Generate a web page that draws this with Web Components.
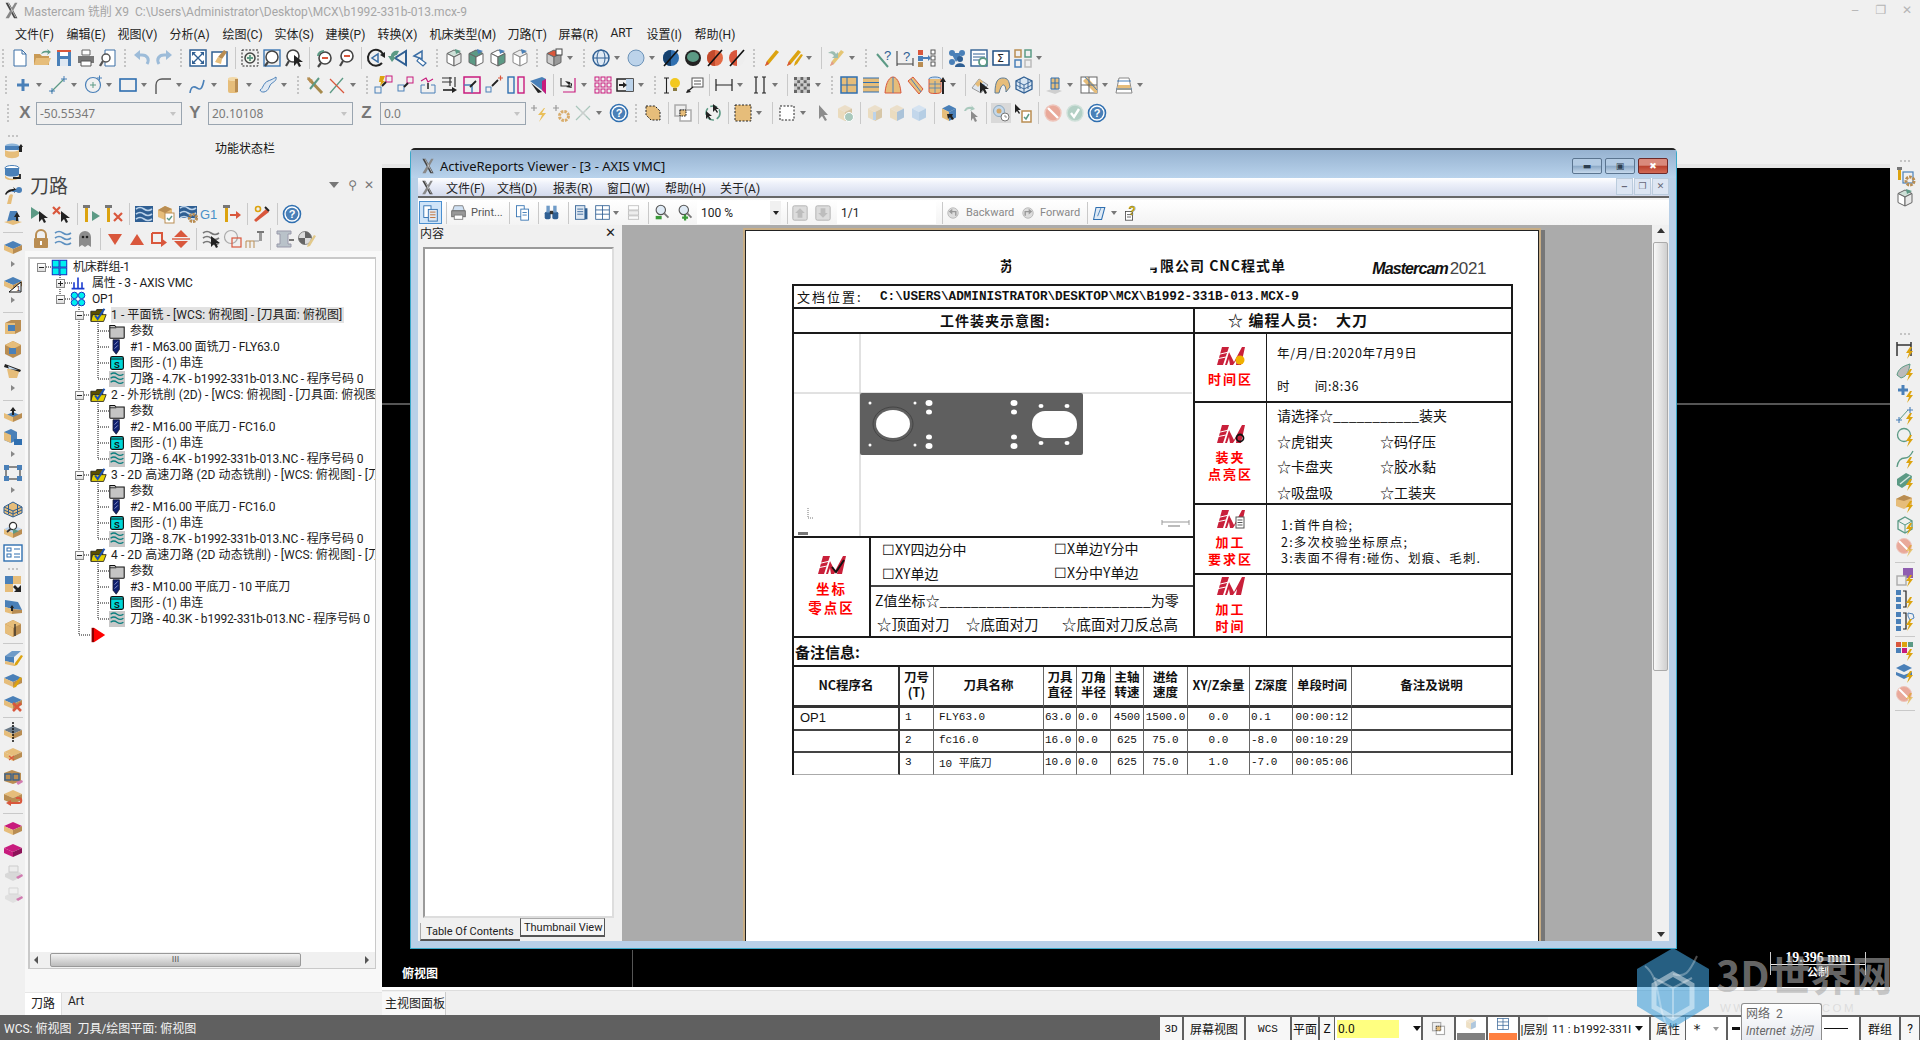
<!DOCTYPE html>
<html lang="zh">
<head>
<meta charset="utf-8">
<title>Mastercam</title>
<style>
  html, body { margin: 0; padding: 0; background: #f0f0f0; }
  body { font: 12px "Roboto", "Noto Sans CJK SC", sans-serif; color: #222; }
</style>
</head>
<body>
<mc-app></mc-app>
<script>
const BLUE = '#4a80b8', TAN = '#e6bd7a', DTAN = '#b98d52', GRN = '#5c9a85', RED = '#d9573c', PNK = '#c81b7d', GOLD = '#dca30f', INK = '#333';
const CJK = '"Roboto", "Noto Sans CJK SC", sans-serif';

const fb = (t = BLUE, l = TAN, r = DTAN) => `<path d="M1 8 10 4l9 4-9 4z" fill="${t}"/><path d="M1 8l9 4v5l-9-4z" fill="${l}"/><path d="M19 8l-9 4v5l9-4z" fill="${r}"/>`;
const cube = (t, l, r, s = 'none') => `<path d="M10 2l7 3.5-7 3.5-7-3.5z" fill="${t}" stroke="${s}"/><path d="M3 5.5l7 3.5v9l-7-3.5z" fill="${l}" stroke="${s}"/><path d="M17 5.5l-7 3.5v9l7-3.5z" fill="${r}" stroke="${s}"/>`;
const bolt = `<path d="M15 8l-4 6h3l-2 6 6-8h-3l2-4z" fill="${GOLD}"/>`;
const cur = `<path d="M10 7v11l3-3 2 4 2-1-2-4h4z" fill="#222"/>`;
const line = (d, c = INK, w = 1.2) => `<path d="${d}" fill="none" stroke="${c}" stroke-width="${w}"/>`;
const wave = (c = BLUE, y = 4) => line(`M2 ${y}q4-3 8 0t8 0M2 ${y + 5}q4-3 8 0t8 0M2 ${y + 10}q4-3 8 0t8 0`, c, 1.6);
const cvw = (c) => cube('#cfe0d8', '#fff', '#e8e8e8', '#666') + `<path d="M11 1l6 2-5 3z" fill="${c}"/>`;
const sph = (a, b) => `<circle cx="10" cy="10" r="8" fill="${a}"/><path d="M10 2a8 8 0 0 0 0 16z" fill="${b}"/>`;
const slash = (a, b) => sph(a, b) + line('M3 18 17 2', '#111', 1.6);
const pencil = `<path d="M4 18l2-5L15 2l3 2L8 16z" fill="${GOLD}"/><path d="M4 18l2-5 2 3z" fill="${RED}"/>`;
const sel = (c1, c2) => `<rect x="2" y="10" width="6" height="6" fill="none" stroke="${c1}"/><rect x="11" y="2" width="6" height="6" fill="none" stroke="${c2}"/>`;

const ICONS = {
  new: `<path d="M4 2h8l4 4v12H4z" fill="#fff" stroke="#3a6ea5"/><path d="M12 2v4h4" fill="none" stroke="#3a6ea5"/>`,
  open: `<path d="M2 6h6l2 2h7v9H2z" fill="#c99a55"/><path d="M4 10h15l-3 7H2z" fill="${TAN}"/><path d="M9 6c1-3 4-4 7-3l-1-2 4 3-4 3 1-2c-2-1-5 0-7 1z" fill="${GRN}"/>`,
  save: `<path d="M3 2h14v16H3z" fill="${BLUE}"/><path d="M6 2h8v6H6z" fill="#fff"/><path d="M3 2h14v2H3z" fill="${RED}"/><path d="M6 11h8v7H6z" fill="#dfe8f2"/>`,
  print: `<path d="M6 2h8v5H6z" fill="#fff" stroke="#666"/><path d="M2 8h16v7H2z" fill="#777"/><path d="M5 13h10v5H5z" fill="#fff" stroke="#555"/>`,
  preview: `<path d="M7 2h10v16H7z" fill="#fff" stroke="#3a6ea5"/><circle cx="8" cy="10" r="4" fill="#fff" stroke="#555" stroke-width="1.5"/>` + line('M5 13 2 18', '#555', 2.4),
  undo: line('M15 16c3-5 0-9-5-9H6', '#9dbcd9', 3) + `<path d="M8 2 2 7l6 5z" fill="#9dbcd9"/>`,
  redo: line('M5 16c-3-5 0-9 5-9h4', '#9dbcd9', 3) + `<path d="M12 2l6 5-6 5z" fill="#9dbcd9"/>`,
  fit: `<rect x="2" y="2" width="16" height="16" fill="#fff" stroke="#2f5f93" stroke-width="1.5"/>` + line('M5 5l10 10M15 5 5 15', '#2f5f93', 1.4) + `<path d="M4 4h4L4 8zM16 4h-4l4 4zM4 16h4l-4-4zM16 16h-4l4-4z" fill="#2f5f93"/>`,
  brush: `<rect x="2" y="4" width="15" height="14" fill="#fff" stroke="#2f5f93" stroke-width="1.5"/><path d="M8 9l6-7 3 2-5 7z" fill="${DTAN}"/><path d="M5 14l3-5 4 2-1 5z" fill="${TAN}"/>`,
  zwin: `<rect x="2" y="2" width="16" height="16" fill="none" stroke="#222" stroke-dasharray="2 1.5"/><circle cx="10" cy="10" r="5" fill="#eef3e8" stroke="#444" stroke-width="1.5"/>` + line('M10 7v6M7 10h6', GRN, 1.8),
  zcir: `<rect x="2" y="2" width="16" height="16" fill="none" stroke="#2f6fb0" stroke-width="1.3"/><circle cx="10" cy="9" r="6" fill="#fff" stroke="#444" stroke-width="1.5"/>` + line('M6 14 3 18', '#444', 2.2),
  zcur: `<circle cx="9" cy="8" r="6" fill="#fff" stroke="#444" stroke-width="1.6"/>` + line('M5 13 2 18', '#444', 2.2) + cur,
  zprev: `<circle cx="11" cy="10" r="6" fill="#fff" stroke="#444" stroke-width="1.6"/>` + line('M7 15 4 19', '#444', 2.2) + line('M8 10h6', RED, 2) + line('M4 8c0-3 3-5 6-5', GRN, 2),
  zout: `<circle cx="11" cy="8" r="6" fill="#fff" stroke="#444" stroke-width="1.6"/>` + line('M7 13 4 18', '#444', 2.2) + line('M8 8h6', RED, 2),
  rot: `<path d="M16 15A8 8 0 1 1 17 6" fill="none" stroke="#222" stroke-width="2"/><path d="M14 7l5-3v6z" fill="#222"/><path d="M12 6v8L6 10z" fill="none" stroke="#3a6ea5" stroke-width="1.5"/>`,
  arrback: `<path d="M18 3v14L7 10z" fill="none" stroke="#2f5f93" stroke-width="2"/><path d="M3 8c0-4 4-6 8-5l-2 4c-2 0-3 1-3 2l2 0-4 5-4-6z" fill="${GRN}"/>`,
  tri: `<path d="M4 8l8-5v8z" fill="none" stroke="#3a6ea5" stroke-width="1.5"/><path d="M9 10l7 5-3 3-6-5z" fill="#fff" stroke="#3a6ea5" stroke-width="1.2"/>`,
  cv1: cvw(GRN), cv2: cube(GRN, GRN, '#fff', '#666') + `<path d="M11 1l6 2-5 3z" fill="${BLUE}"/>`, cv3: cube('#fff', '#fff', GRN, '#666') + `<path d="M11 1l6 2-5 3z" fill="${BLUE}"/>`, cv4: cube('#eee', '#fff', '#fff', '#888') + `<path d="M11 1l6 2-5 3z" fill="${BLUE}"/>`,
  cred: cube(RED, '#ccc', '#999', '#666') + `<rect x="12" y="1" width="6" height="6" fill="#fff" stroke="#444"/>`,
  globe: `<circle cx="10" cy="10" r="8" fill="#dfeaf5" stroke="#2f5f93" stroke-width="1.5"/><ellipse cx="10" cy="10" rx="4" ry="8" fill="none" stroke="#2f5f93"/>` + line('M2 10h16', '#2f5f93', 1),
  sph: `<circle cx="10" cy="10" r="8" fill="#bcd3ea" stroke="#6d93b8"/>`,
  sdark: slash('#2f6fb0', '#14406e'), sgreen: `<circle cx="10" cy="10" r="8" fill="#222"/><ellipse cx="10" cy="9" rx="6" ry="5" fill="#5c9a85"/>`, sred: slash('#e36a45', '#c24a2c'), swhite: slash('#eee', RED),
  pen: pencil,
  pen2: pencil + `<path d="M11 18l1-4 6-8 2 1-6 9z" fill="${GOLD}"/>`,
  pendim: `<g opacity=".55">${pencil}</g>` + `<path d="M2 5c4-3 7-2 8 1l2-2v6H6l2-2c-1-2-3-3-6-3z" fill="#9cbdb0"/>`,
  qline: line('M4 6l11 13', GRN, 2) + `<text x="11" y="12" font-size="13" font-family="Liberation Sans" fill="#2f5f93">?</text>`,
  qdim: line('M2 3v15M2 16h16M18 10v8', '#444', 1.1) + `<text x="8" y="13" font-size="13" font-family="Liberation Sans" fill="#2f5f93">?</text>`,
  tree: `<rect x="1" y="2" width="5" height="5" fill="${RED}"/><rect x="1" y="8" width="5" height="5" fill="${BLUE}"/><rect x="1" y="14" width="5" height="5" fill="${DTAN}"/><path d="M6 9h5v-2l3 3-3 3v-2H6z" fill="${BLUE}"/><rect x="14" y="2" width="4" height="4" fill="#fff" stroke="#555"/><rect x="14" y="8" width="4" height="4" fill="#fff" stroke="#555"/><rect x="14" y="14" width="4" height="4" fill="#fff" stroke="#555"/>`,
  people: `<circle cx="5" cy="5" r="3" fill="${BLUE}"/><circle cx="15" cy="5" r="3" fill="${BLUE}"/><circle cx="5" cy="14" r="3" fill="${BLUE}"/><path d="M4 5l11 0-6 9z" fill="${BLUE}"/><circle cx="13" cy="11" r="3" fill="#2f5f93"/><path d="M8 19c0-5 10-5 10 0z" fill="#2f5f93"/>`,
  report: `<rect x="2" y="2" width="16" height="16" fill="#fff" stroke="#2f5f93" stroke-width="1.4"/>` + line('M4 6h12M4 9h12M4 12h7', '#2f5f93', 1) + `<circle cx="14" cy="14" r="4" fill="none" stroke="${GRN}" stroke-width="1.8"/>`,
  sigma: `<rect x="2" y="3" width="16" height="14" fill="#fff" stroke="#1f4f83" stroke-width="1.5"/><text x="6" y="14" font-size="11" font-family="DejaVu Sans" fill="#222">Σ</text>`,
  grid4: `<rect x="2" y="2" width="6" height="7" fill="none" stroke="${DTAN}" stroke-width="1.5"/><rect x="12" y="2" width="6" height="7" fill="none" stroke="${GRN}" stroke-width="1.5"/><rect x="2" y="12" width="6" height="7" fill="none" stroke="${BLUE}" stroke-width="1.5"/><rect x="12" y="12" width="6" height="7" fill="none" stroke="#bbb" stroke-width="1.5"/>`,
  plus: line('M10 4v12M4 10h12', BLUE, 3),
  line: line('M3 17 16 4', GRN, 1.2) + line('M13 4h6M16 1v6M1 16h6M4 13v6', BLUE, 1),
  circ: `<circle cx="10" cy="10" r="7.5" fill="none" stroke="${BLUE}" stroke-width="1.2"/>` + line('M7 10h6M10 7v6', GRN, 1) + line('M14 3h5M16.5 .5v5', BLUE, 1),
  rect: `<rect x="2" y="4" width="16" height="12" fill="none" stroke="#2f6fb0" stroke-width="1.6"/>`,
  fil: line('M3 19V10c0-4 3-6 6-6h9', '#555', 1.4),
  spl: line('M2 18c1-7 4-7 7-5s5 2 7-8', BLUE, 1.6),
  cyl: `<rect x="5" y="3" width="10" height="15" rx="2" fill="${TAN}"/><ellipse cx="10" cy="4" rx="5" ry="2" fill="#f2d8a6"/><rect x="12" y="4" width="3" height="13" fill="${DTAN}"/>`,
  surf: `<path d="M2 15c3-1 3-7 8-9s5-2 8-4c1 4-3 5-5 7s-2 7-7 8c-2 0-3 0-4-2z" fill="#dfe8f2" stroke="${BLUE}"/>`,
  trim: line('M3 3l14 15', '#a68a4c', 3) + line('M14 3 5 14', GRN, 2) + `<path d="M2 2l6 3-3 3z" fill="${DTAN}"/>`,
  cross: line('M3 18 16 3', GRN, 1.3) + line('M3 4l14 14', RED, 1.3),
  x1: `<rect x="12" y="1" width="6" height="6" fill="none" stroke="${PNK}"/><rect x="1" y="12" width="6" height="6" fill="none" stroke="${BLUE}"/><path d="M6 1h5L9 6h2L6 11l1-4H5z" fill="${GOLD}"/>` + line('M8 11l4-4', '#222', 2),
  x2: sel(BLUE, PNK) + line('M8 12l4-4', '#222', 2),
  x3: line('M3 6l5-3 2 4 5-3', PNK, 1.2) + `<path d="M3 10h4M13 10h4M3 10v8h14v-8" fill="none" stroke="${BLUE}"/>` + line('M10 8v6', '#222', 1.5),
  x4: line('M2 3h10M2 7h10M10 2v9M15 2v10', INK, 1.2) + line('M3 15h11', '#222', 1.6) + `<path d="M12 12l5 3-5 3z" fill="#222"/>`,
  x5: `<rect x="2" y="2" width="16" height="16" fill="none" stroke="${PNK}" stroke-width="1.5"/><path d="M2 10h8v8" fill="none" stroke="${BLUE}" stroke-width="1.5"/>` + line('M8 12l6-6', '#222', 1.8),
  x6: `<rect x="2" y="12" width="5" height="5" fill="none" stroke="${BLUE}"/>` + line('M8 11l6-6', '#222', 1.8) + line('M14 3h5M16.5 .5v5', RED, 1.2),
  x7: `<rect x="2" y="2" width="6" height="16" fill="none" stroke="#2f6fb0" stroke-width="1.4"/><rect x="12" y="2" width="6" height="16" fill="none" stroke="${PNK}" stroke-width="1.4"/>`,
  x8: `<path d="M2 6l12-4 4 2v15l-4-4z" fill="${BLUE}"/><path d="M14 6l4-2v15l-4-4z" fill="${PNK}"/><path d="M3 8l11 9-4 1z" fill="#222"/>`,
  x9: line('M3 3v8h10', INK, 1.1) + line('M17 3v14H5', PNK, 1.2) + `<path d="M7 6l7 7-2-6zM14 13l-6-1 6-4z" fill="#222"/>`,
  gridp: `<g fill="${PNK}">${[2, 8, 14].flatMap(y => [2, 8, 14].map(x => `<rect x="${x}" y="${y}" width="4" height="4" fill="none" stroke="${PNK}"/>`)).join('')}</g>`,
  x10: `<rect x="2" y="4" width="16" height="12" fill="none" stroke="#222" stroke-width="1.5"/><rect x="11" y="4" width="7" height="12" fill="#bcd3ea"/><path d="M4 9h4V7l4 3-4 3v-2H4z" fill="#222"/>`,
  lamp: line('M2 3h5M2 18h5M4.5 3v15', '#222', 1.1) + `<circle cx="13" cy="8" r="5" fill="#f2c81f"/><rect x="11" y="13" width="4" height="3" fill="#8a7a40"/>`,
  note: `<rect x="8" y="3" width="11" height="9" fill="#fff" stroke="#555"/>` + line('M10 6h7M10 9h7', '#555', 1) + line('M9 12l-6 5', '#222', 1.3) + `<path d="M2 18l2-4 3 3z" fill="#222"/>`,
  dimh: line('M2 4v12M18 4v12M2 10h16', '#222', 1.2),
  dimv: line('M5 2h4M5 18h4M7 2v16M13 2h4M13 18h4M15 2v16', '#222', 1.2),
  check: [...Array(25)].map((_, i) => `<rect x="${2 + (i % 5) * 3.2}" y="${2 + Math.floor(i / 5) * 3.2}" width="3.2" height="3.2" fill="${i % 2 ? '#ccc' : '#666'}"/>`).join(''),
  s1: `<rect x="2" y="2" width="16" height="16" fill="${TAN}" stroke="#2f6fb0" stroke-width="1.5"/>` + line('M8 2v16M2 10h16', '#2f6fb0', 1),
  s2: `<rect x="2" y="3" width="16" height="14" fill="${TAN}"/>` + line('M2 3h16M2 7.5h16M2 12h16M2 17h16', '#2f6fb0', 1.2),
  s3: `<path d="M2 18C3 6 7 2 10 2s7 4 8 16z" fill="${TAN}" stroke="${RED}"/>` + line('M10 2v16', BLUE, 1),
  s4: `<path d="M3 6l5-4 10 12-4 5z" fill="${TAN}" stroke="${RED}"/>` + line('M6 4l10 13', BLUE, 1),
  s5: `<ellipse cx="8" cy="4" rx="6" ry="2" fill="#cfe0f2" stroke="${BLUE}"/><path d="M2 4v13c0 2 12 2 12 0V4" fill="${TAN}" stroke="${RED}"/>` + line('M2 9h12M2 13h12M8 6v12', BLUE, .8) + `<path d="M16 2l3 5h-2v12h-2V7h-2z" fill="#222"/>`,
  m1: `<path d="M2 13 9 4l9 6-7 8z" fill="#dfe6ee" stroke="#999"/><path d="M5 9l5-5 3 3-5 5z" fill="${TAN}"/><path d="M10 8l5 2-4 5z" fill="${BLUE}"/>` + cur,
  m2: `<path d="M3 18C3 6 6 3 11 3s6 3 7 9l-4 5C14 9 10 6 7 18z" fill="${TAN}" stroke="#5d7c96"/>`,
  m3: `<path d="M10 2l8 4v8l-8 4-8-4V6z" fill="#d9e6f2" stroke="#2f5f93" stroke-width="1.3"/>` + line('M2 6l8 4 8-4M10 10v8M6 4v10M14 4v10M2 10l8 4 8-4', '#2f5f93', .9),
  b1: `<path d="M2 16l9 3 7-3-8-3z" fill="#cfcfcf"/><path d="M7 3h8v11l-8 0z" fill="${TAN}" stroke="#2f6fb0"/>` + line('M11 3v11M7 8h8', '#2f6fb0', 1),
  b2: `<rect x="2" y="2" width="16" height="16" fill="#fff" stroke="#666"/><path d="M8 2l10 11v5h-2L4 6z" fill="${TAN}"/>` + line('M2 10h16M10 2v16', '#666', 1) + line('M6 2l12 13', BLUE, 1),
  b3: `<path d="M2 18h16l-3-15H5z" fill="#fff" stroke="#888"/><path d="M4 10h12l1 5H3z" fill="${TAN}"/>` + line('M3 6h14M2 14h16', BLUE, 1.2),
  qb1: line('M2 5h6M5 2v6', '#999', 1.2) + `<g transform="translate(1 0)"><path d="M14 5 8 12h4l-3 7 7-9h-4l3-5z" fill="#e9bf5a"/></g>`,
  qb2: line('M2 5h6M5 2v6', '#999', 1.2) + `<circle cx="13" cy="13" r="4.5" fill="none" stroke="#d8ac6a" stroke-width="3" stroke-dasharray="2.5 1"/>`,
  qx: line('M3 17 17 3M3 3l14 14', '#a9c6bb', 1.2) + line('M7 7l6 6M13 7l-6 6', '#ccc', 1),
  help: `<circle cx="10" cy="10" r="8.5" fill="#fff" stroke="#2f6fb0" stroke-width="1.6"/><circle cx="10" cy="10" r="6.3" fill="${BLUE}"/><text x="10" y="14" font-size="11" font-weight="700" text-anchor="middle" font-family="Liberation Sans" fill="#fff">?</text>`,
  dashb: `<path d="M3 3l9 0 5 5v9H8L3 12z" fill="${TAN}" stroke="#222" stroke-dasharray="2 1.4"/>`,
  sel2: `<rect x="2" y="2" width="11" height="11" fill="#eee" stroke="#aaa" stroke-width="1.5"/><rect x="7" y="7" width="11" height="11" fill="#fff" stroke="#aaa" stroke-width="1.5"/><rect x="7" y="7" width="6" height="6" fill="${TAN}" stroke="#222" stroke-dasharray="1.5 1"/>`,
  cyc: `<circle cx="10" cy="10" r="7" fill="none" stroke="${GRN}" stroke-width="1.6" stroke-dasharray="7 3"/><path d="M3 8v8l2-2 2 3 1-1-2-3h3zM10 1v8l2-2 2 3 1-1-2-3h3z" fill="#222"/>`,
  fillb: `<rect x="2" y="2" width="16" height="16" fill="${TAN}" stroke="#222" stroke-dasharray="2 1.5"/>`,
  dashw: `<rect x="3" y="3" width="14" height="14" fill="#fff" stroke="#222" stroke-dasharray="2 1.5"/>`,
  curg: `<path d="M6 2v14l3-3 3 5 2-1-3-5h4z" fill="#8c8c8c"/>`,
  curcube: `<g opacity=".75">${cube('#ead9bb', '#e8d4ad', '#cdb68a')}</g><circle cx="14" cy="14" r="4.5" fill="#a9c9bd" stroke="#fff"/>`,
  bx1: `<g opacity=".7">${cube('#ead9bb', '#e8d4ad', '#cdb68a')}</g><rect x="8" y="9" width="3" height="8" fill="#bcd3ea"/>`,
  bx2: `<g opacity=".7">${cube('#ead9bb', '#e8d4ad', '#8eb0d0')}</g>`,
  bx3: `<g opacity=".8">${cube('#cfe0f2', '#b9d2ea', '#a8c6e2')}</g>`,
  cv: cube(BLUE, TAN, BLUE) + `<path d="M8 11h6l-1 2 2 3-2 1-2-3-2 2z" fill="#222"/>`,
  cur2: `<path d="M3 8c1-4 5-5 8-4l-1-2 4 4-5 2 1-2c-2 0-4 0-5 2z" fill="#a9c9bd"/><path d="M10 8v10l2-3 2 4 2-1-2-4h3z" fill="#8c8c8c"/>`,
  tgt: `<rect width="20" height="20" fill="#d9d9d9"/><circle cx="8" cy="8" r="5.5" fill="#c4d8ea" stroke="#8ea8bc"/><circle cx="8" cy="8" r="2.5" fill="#d4a86a"/><circle cx="14" cy="14" r="4" fill="#fff" stroke="#777"/>` + line('M14 12v2h2', '#777', .8),
  clip: `<path d="M2 1v9l2-2 2 3 1-1-2-3h3z" fill="#222"/><rect x="9" y="8" width="9" height="11" fill="#fff" stroke="${DTAN}" stroke-width="1.5"/>` + line('M11 14l2 2 3-5', GRN, 1.5),
  no: `<circle cx="10" cy="10" r="8" fill="#e9a99a" stroke="#eec5bb" stroke-width="1.4"/>` + line('M5 5l10 10', '#fff', 2.4),
  ok: `<circle cx="10" cy="10" r="8" fill="#b3d0c5" stroke="#cfe0d9" stroke-width="1.4"/>` + line('M6 10l3 4 5-8', '#fff', 2.4),
  l1: `<ellipse cx="9" cy="5" rx="7" ry="2.5" fill="#8db4d8"/><path d="M2 5v4h14V5z" fill="${BLUE}"/><path d="M2 9c3 2 11 2 14 0v6c-3 3-11 3-14 0z" fill="${TAN}"/><path d="M14 12l4-5 2 3h-1v5h-3v-5z" fill="#222" transform="translate(0 -4)"/>`,
  l2: `<ellipse cx="9" cy="5" rx="7" ry="2.5" fill="#fff" stroke="${BLUE}"/><path d="M2 5v7c3 2 11 2 14 0V5z" fill="${BLUE}"/><path d="M2 12c3 5 11 5 14 0v3c-3 3-11 3-14 0z" fill="${TAN}"/>` + line('M10 15h7V11', '#222', 1.8),
  l3: `<path d="M4 19l2-8c1-2 3-2 4-1l-2 9z" fill="${TAN}"/><circle cx="16" cy="5" r="3" fill="${BLUE}"/><path d="M2 9c2-4 5-5 9-5l-1-2 4 3-3 3v-2c-3 0-6 1-8 4z" fill="#222"/><path d="M8 7l8-4v4z" fill="${BLUE}"/>`,
  l4: `<path d="M4 15l3-11h7l2 11z" fill="${BLUE}"/><path d="M1 15l9-2 9 2-9 3z" fill="${TAN}"/><path d="M11 10l3-5 3 5h-2v4h-2v-4z" fill="#222"/>`,
  l5: fb(), l6: fb() + `<path d="M18 19H6L18 9z" fill="#fff" stroke="#111"/><text x="13.5" y="18" font-size="7" font-family="Liberation Sans" fill="#111">1</text>`,
  l7: `<path d="M2 6l6-3h10v11l-6 3H2z" fill="${DTAN}"/><path d="M2 6h10v11H2z" fill="${TAN}"/><rect x="5" y="8" width="7" height="6" fill="${BLUE}"/>`,
  l8: `<path d="M10 2l8 4v9l-8 4-8-4V6z" fill="${DTAN}"/><path d="M2 6l8 4 8-4-8-4z" fill="${TAN}"/><rect x="6" y="9" width="7" height="6" fill="${BLUE}"/>`,
  l9: `<path d="M4 8h13l-3 9H6z" fill="${TAN}"/><path d="M2 3l16 6-1 2L1 6z" fill="#222"/><path d="M5 5l10 4-9-1z" fill="#bcd3ea"/>`,
  l10: fb('#4a80b8', TAN, DTAN).replace('M1 8 10 4l9 4-9 4z', 'M1 11 10 7l9 4-9 4z') + `<path d="M7 6l3-4 3 4h-2v4H9V6z" fill="#222"/>`,
  l11: `<path d="M1 5l7-3 6 3v8l-6 3-7-3z" fill="${BLUE}"/><path d="M1 5l7 3v8l-7-3z" fill="${TAN}"/><rect x="11" y="12" width="8" height="6" fill="#2f6fb0"/>`,
  l12: `<rect x="3" y="4" width="14" height="12" fill="none" stroke="#222"/><rect x="1" y="2" width="5" height="5" fill="${BLUE}"/><rect x="14" y="2" width="5" height="5" fill="${BLUE}"/><rect x="1" y="13" width="5" height="5" fill="${BLUE}"/><rect x="14" y="13" width="5" height="5" fill="${BLUE}"/>`,
  l13: `<path d="M1 8l9-5 9 5v6l-9 4-9-4z" fill="${TAN}" stroke="#2f5f93"/>` + line('M1 8l9 4 9-4M10 12v6M5.5 6v9M14.5 6v9M1 11l9 4 9-4', '#2f5f93', 1),
  l14: fb('#bcd3ea') + `<circle cx="10" cy="5" r="3.6" fill="#fff" stroke="#333" stroke-width="1.2"/>` + line('M7.5 8 4 11', '#333', 1.8) + `<path d="M10 8l6 2-6 3z" fill="${GRN}"/>`,
  l15: `<rect x="1" y="2" width="18" height="16" fill="#fff" stroke="#2f6fb0" stroke-width="1.4"/><rect x="4" y="5" width="4" height="3" fill="none" stroke="#2f6fb0"/><rect x="4" y="11" width="4" height="3" fill="none" stroke="#2f6fb0"/>` + line('M11 6h6M11 11h6M11 14h6', '#2f6fb0', 1.2),
  l16: `<rect x="2" y="2" width="8" height="8" fill="${BLUE}"/><rect x="10" y="2" width="8" height="8" fill="${TAN}"/><rect x="2" y="10" width="8" height="8" fill="${TAN}"/><path d="M18 18h-7l2-2-3-3 2-2 3 3 3-3z" fill="#222"/>`,
  l17: `<path d="M2 4l13 2 4 8-10-1-7-2z" fill="${BLUE}"/><path d="M2 11l7 2v5l-7-2z" fill="${TAN}"/><path d="M9 13l10 1v3l-10 1z" fill="${DTAN}"/><path d="M7 12l2-3 2 3h-1v3H8v-3z" fill="#222"/>`,
  l18: `<path d="M10 2l8 4v9l-8 4-8-4V6z" fill="${DTAN}"/><path d="M2 6l8 4 8-4-8-4z" fill="${TAN}"/><path d="M2 6l8 4v9l-8-4z" fill="${TAN}"/>` + line('M12 6v12', '#222', 1.2),
  l19: `<path d="M2 8l7-5h9l-7 6z" fill="#6f9bc8"/><path d="M2 8l9 1v6l-9-2z" fill="${BLUE}"/><path d="M2 13l9 2v3l-9-2z" fill="${TAN}"/><path d="M11 18l1-3 6-8 2 1-6 9z" fill="${GOLD}"/>`,
  l20: fb() + `<path d="M10 18l1-3 6-8 2 1-6 9z" fill="${GOLD}"/>`,
  l21: fb() + line('M10 11l8 8M18 11l-8 8', RED, 2.6),
  l22: fb('#6b7a88') + line('M10 0v20', '#111', 1.5).replace('stroke-width', 'stroke-dasharray="2 1" stroke-width'),
  l23: fb(TAN) + line('M6 12l5 4M11 12l-5 4', RED, 1.2),
  l24: `<path d="M1 7l8-3 9 3v8l-8 3-9-3z" fill="${DTAN}"/><rect x="2" y="8" width="6" height="6" fill="none" stroke="#2f5f93" stroke-width="1.3"/><rect x="10" y="8" width="6" height="6" fill="none" stroke="#2f5f93" stroke-width="1.3"/><path d="M13 16l6-2 1 2-5 3z" fill="#d07ab0"/>`,
  l25: `<path d="M1 6l9-4 9 4-9 4z" fill="${TAN}"/><path d="M1 6v6l9 4 9-4V6l-9 4z" fill="${DTAN}"/>` + line('M6 15h10c3 0 3-5 0-5h-3', RED, 2) + `<path d="M8 12v6l-5-3z" fill="${RED}"/>`,
  l26: fb(PNK),
  l27: fb(PNK, PNK, '#8c1358'),
  l28: `<path d="M2 12l8-4 8 3v4l-8 4-8-4z" fill="#d8d8d8"/><path d="M6 4h9v6H6z" fill="#ececec" stroke="#ccc"/><path d="M13 15l6-3 1 2-5 3z" fill="#d07ab0"/>`,
  l29: `<path d="M2 12l8-4 8 3v4l-8 4-8-4z" fill="#e0e0e0"/><path d="M6 4h9v6H6z" fill="#f0f0f0" stroke="#d5d5d5"/><path d="M13 15l6-3 1 2-5 3z" fill="#d07ab0"/>`,
  r1: `<rect x="8" y="6" width="10" height="11" fill="none" stroke="${BLUE}" stroke-width="1.2"/><rect x="3" y="2" width="3" height="12" fill="${GOLD}"/><rect x="2" y="1" width="5" height="3" fill="#777"/><circle cx="15" cy="15" r="4" fill="none" stroke="${DTAN}" stroke-width="3" stroke-dasharray="2.5 1"/>`,
  r2: cvw(GRN),
  t1: line('M2 3v14M16 3v14M2 6h14', INK, 1.5) + bolt,
  t2: `<path d="M2 14c1-6 6-9 13-11-1 6-2 12-9 14z" fill="#bbb" stroke="${GRN}"/>` + bolt,
  t3: line('M8 2v10M3 7h10', BLUE, 3) + bolt,
  t4: line('M4 15 13 5', GRN, 1) + line('M12 5h6M15 2v6M1 15h6M4 12v6', BLUE, 1.1) + bolt,
  t5: `<circle cx="9" cy="8" r="6.5" fill="none" stroke="${GRN}" stroke-width="1.3"/>` + bolt,
  t6: line('M2 18c1-7 4-9 8-9s6-3 8-7', GRN, 1.3) + bolt,
  t7: `<path d="M2 8l9-6 6 3-1 6-9 6-5-3z" fill="${GRN}"/>` + line('M5 13l10-8', '#d7e7e0', 1.5) + bolt,
  t8: `<path d="M1 6l8-4 8 3v7l-8 4-8-3z" fill="${TAN}"/><path d="M1 6l8-4 8 3-8 3z" fill="${DTAN}"/>` + bolt,
  t9: `<path d="M10 2l7 4v8l-7 4-7-4V6z" fill="none" stroke="${GRN}" stroke-width="1.3"/>` + line('M3 6l7 4 7-4M10 10v8', GRN, 1) + bolt,
  t10: `<rect x="8" y="1" width="10" height="10" fill="#8f5db0" /><rect x="2" y="9" width="9" height="9" fill="#eee" stroke="#aaa" stroke-width="1.4"/>` + bolt,
  t11: `<rect x="1" y="1" width="5" height="5" fill="${BLUE}"/><rect x="1" y="8" width="5" height="5" fill="${BLUE}"/><rect x="1" y="15" width="5" height="5" fill="${BLUE}"/>` + line('M8 2h3v16H8', '#222', 1.2) + bolt,
  t12: `<rect x="1" y="1" width="5" height="5" fill="${BLUE}"/><rect x="1" y="8" width="5" height="5" fill="${BLUE}"/><rect x="1" y="15" width="5" height="5" fill="${BLUE}"/>` + line('M8 2h3v16H8', '#222', 1.2) + line('M13 2l5 1 1 4-4 2-2-4z', BLUE, 1) + bolt,
  t13: `<rect x="1" y="1" width="5" height="5" fill="${RED}"/><rect x="7" y="1" width="5" height="5" fill="${GOLD}"/><rect x="13" y="1" width="5" height="5" fill="${GRN}"/><rect x="1" y="7" width="5" height="5" fill="${BLUE}"/><rect x="7" y="7" width="5" height="5" fill="${PNK}"/>` + bolt,
  t14: `<path d="M1 5l8-4 8 4-8 4zM1 9l8 3 8-3v3l-8 4-8-4z" fill="${BLUE}"/>` + bolt,
  t15: `<circle cx="9" cy="9" r="7.5" fill="#e9a99a" stroke="#eec5bb"/>` + line('M4 4l10 10', '#fff', 2) + `<g opacity=".55">${bolt}</g>`,
  play: `<path d="M2 3l9 6-9 6z" fill="${GRN}"/>` + cur,
  xcur: line('M2 3l7 7M9 3l-7 7', RED, 2.2) + cur,
  toolg: `<rect x="1" y="1" width="7" height="3" fill="#777"/><rect x="3" y="4" width="3" height="14" fill="${GOLD}"/><path d="M10 7l8 5-8 5z" fill="${GRN}"/>`,
  toolx: `<rect x="1" y="1" width="7" height="3" fill="#777"/><rect x="3" y="4" width="3" height="14" fill="${GOLD}"/>` + line('M10 9l8 8M18 9l-8 8', RED, 2.2),
  wblue: `<rect x="1" y="2" width="18" height="16" fill="#2f5f93"/>` + wave('#bcd3ea', 5),
  wclip: `<path d="M2 6l7-4 7 3v8l-7 3-7-3z" fill="${TAN}"/><path d="M2 6l7 3 7-4-7-3z" fill="${DTAN}"/><rect x="9" y="9" width="9" height="10" fill="#fff" stroke="${DTAN}"/>` + line('M11 14l2 2 3-4', GRN, 1.4),
  wgear: `<rect x="1" y="2" width="18" height="12" fill="#2f5f93"/>` + wave('#bcd3ea', 4) + `<circle cx="15" cy="14" r="3.6" fill="none" stroke="${DTAN}" stroke-width="3" stroke-dasharray="2.3 .9"/>`,
  g1: `<text x="0" y="15" font-size="13" font-family="Liberation Sans" fill="#4a90c8">G1</text>`,
  toolarrow: `<rect x="1" y="1" width="7" height="3" fill="#777"/><rect x="3" y="4" width="3" height="14" fill="${GOLD}"/><path d="M8 10h6V7l5 4-5 4v-3H8z" fill="${RED}"/>`,
  wand: `<path d="M4 18l-2-2L14 5l3 3z" fill="${RED}"/><circle cx="6" cy="5" r="2.5" fill="none" stroke="${GOLD}" stroke-width="1.6"/>` + line('M13 3l4 4', '#222', 2),
  lock: `<path d="M5 9V6a5 5 0 0 1 10 0v3" fill="none" stroke="${DTAN}" stroke-width="2"/><rect x="3" y="9" width="14" height="10" rx="1" fill="${DTAN}"/><rect x="9" y="12" width="2" height="4" fill="#fff"/>`,
  wlight: wave('#5d90c0', 4),
  ghost: `<path d="M4 18V8a6 6 0 0 1 12 0v10l-3-2-3 2-3-2z" fill="#8c8c8c"/><circle cx="8" cy="8" r="1.3" fill="#222"/><circle cx="12" cy="8" r="1.3" fill="#222"/>`,
  dn: `<path d="M3 5h14l-7 11z" fill="${RED}"/>`,
  up: `<path d="M3 16h14L10 5z" fill="${RED}"/>`,
  mv: line('M3 4h10v8', RED, 2) + line('M3 4v10h10', RED, 2) + `<path d="M12 9v9l6-4.500z" fill="${RED}"/>`,
  ud: `<path d="M3 8h14L10 1zM3 12h14l-7 7z" fill="${RED}"/>` + line('M1 10h18', RED, 1.4),
  wsel: wave('#777', 4) + cur,
  circsq: `<circle cx="8" cy="8" r="6.5" fill="none" stroke="#aaa" stroke-width="1.2"/><rect x="9" y="9" width="9" height="9" fill="none" stroke="${RED}" stroke-width="1.2"/>`,
  stepg: line('M1 19v-7h8v7M5 12v7', DTAN, 1) + `<rect x="12" y="2" width="7" height="2" fill="#777"/><rect x="14" y="4" width="3" height="8" fill="#9a9a9a"/>` + line('M9 12h5', '#9a9a9a', 1),
  mach: `<path d="M2 2h14v3h-3v10h3v3H2v-3h3V5H2z" fill="#b9c2c9" stroke="#99a"/><rect x="14" y="10" width="5" height="2" fill="#777"/>`,
  ballp: `<circle cx="8" cy="9" r="6.5" fill="#ddd" stroke="#888"/><path d="M8 9V2.500A6.500 6.500 0 0 1 14.500 9zM8 9v6.500A6.500 6.500 0 0 1 1.500 9z" fill="#666"/><path d="M10 18l1-3 6-9 2 1-6 10z" fill="#e2c98a"/>`,
  group: `<g fill="#00f0f0" stroke="#1030c0" stroke-width="1.2"><rect x="1.500" y="1.500" width="8" height="8"/><rect x="10.500" y="1.500" width="8" height="8"/><rect x="1.500" y="10.500" width="8" height="8"/><rect x="10.500" y="10.500" width="8" height="8"/></g>`,
  bars: `<path d="M2 16h16v2H2zM4 9h2v7H4zM9 3h2v13H9zM14 9h2v7h-2z" fill="#1c3cd0"/>`,
  ops: `<g fill="#00f0f0" stroke="#1030c0" stroke-width="1.2"><circle cx="5.500" cy="5.500" r="4"/><circle cx="14.500" cy="5.500" r="4"/><circle cx="5.500" cy="14.500" r="4"/><circle cx="14.500" cy="14.500" r="4"/></g>`,
  opf: `<path d="M1 5h6l1-2h7v13H1z" fill="#5c5000" stroke="#222"/><path d="M3 9h16l-3 8H1z" fill="#e4d000" stroke="#222"/>` + line('M6 10l3 4 8-12', '#1a4fb0', 2.4),
  fold: `<path d="M1 6V3h6l2 2h10v13a1 1 0 0 1-1 1H2a1 1 0 0 1-1-1z" fill="#c4c4c4" stroke="#111" stroke-width="1.3"/>` + line('M1 6h8', '#111', 1),
  tool: `<path d="M5 1h8v12l-4 6-4-5z" fill="#10206f" stroke="#223"/>` + line('M7 7l4-4M7 12l4-4', '#aab4e0', 1),
  geo: `<rect x="2" y="2" width="16" height="16" rx="2" fill="#00d8d8" stroke="#111" stroke-width="1.4"/>` + line('M2 5h16', '#111', 1.2) + `<text x="10" y="16" font-size="11" font-weight="700" text-anchor="middle" font-family="Liberation Sans" fill="#111">S</text>`,
  tpath: `<rect width="20" height="20" fill="#c8c8c8"/>` + wave('#0b7f7f', 4),
  flag: `<rect x="2" y="1" width="3" height="18" fill="#800"/><path d="M5 1l14 9-14 9z" fill="#f00"/>`,
  xlogo: `<path d="M3 1h4l10 18h-4z" fill="#444"/><path d="M17 1h-3L3 19h4z" fill="#888"/><path d="M6 1l9 17" stroke="#eee" stroke-width=".8" fill="none"/>`,
  vlist: `<rect x="2" y="2" width="8" height="13" fill="#fff" stroke="#2f6fb0"/><rect x="7" y="6" width="10" height="13" fill="#dfe8f2" stroke="#2f6fb0"/>` + line('M9 9h6M9 12h6M9 15h6', '#c06a2c', 1),
  vprint: `<path d="M5 2h10l2 6H3z" fill="#cfe0f2" stroke="#777"/><rect x="2" y="8" width="16" height="7" fill="#999" stroke="#666"/><rect x="5" y="13" width="10" height="5" fill="#fff" stroke="#777"/>`,
  vcopy: `<rect x="3" y="2" width="9" height="13" fill="#fff" stroke="#2f6fb0"/><rect x="8" y="6" width="9" height="13" fill="#fff" stroke="#2f6fb0"/>` + line('M10 10h5M10 13h5', '#2f6fb0', 1),
  vfind: `<rect x="2" y="9" width="7" height="9" rx="2" fill="#2f5f93"/><rect x="11" y="9" width="7" height="9" rx="2" fill="#2f5f93"/><rect x="4" y="2" width="4" height="8" fill="#6f9bc8"/><rect x="12" y="2" width="4" height="8" fill="#6f9bc8"/><rect x="8" y="8" width="4" height="4" fill="#333"/>`,
  vpage: `<rect x="3" y="2" width="11" height="16" fill="#dfe8f2" stroke="#2f5f93"/>` + line('M5 6h7M5 9h7M5 12h7', '#2f5f93', 1) + `<rect x="14" y="5" width="3" height="13" fill="#2f5f93"/>`,
  vmulti: `<rect x="2" y="2" width="16" height="16" fill="#fff" stroke="#2f5f93"/>` + line('M10 2v16M2 7h16M2 12h16', '#2f5f93', 1),
  vstack: `<g opacity=".4"><rect x="4" y="2" width="12" height="5" fill="#fff" stroke="#666"/><rect x="4" y="8" width="12" height="5" fill="#ddd" stroke="#666"/><rect x="4" y="14" width="12" height="4" fill="#fff" stroke="#666"/></g>`,
  vz1: `<circle cx="8" cy="7" r="5.500" fill="#dfeaf5" stroke="#555" stroke-width="1.3"/>` + line('M12 11l5 5', '#777', 2.2) + `<rect x="2" y="14" width="7" height="4" fill="#3a9a3a"/>`,
  vz2: `<circle cx="8" cy="7" r="5.500" fill="#dfeaf5" stroke="#555" stroke-width="1.3"/>` + line('M12 11l5 5', '#777', 2.2) + line('M6 16h7M9.500 12.500v7', '#3a9a3a', 2.6),
  vup: `<rect x="1" y="1" width="18" height="18" rx="2" fill="#dcdcdc" stroke="#aaa"/><path d="M10 4l6 6h-3v6H7v-6H4z" fill="#bdbdbd"/>`,
  vdn: `<rect x="1" y="1" width="18" height="18" rx="2" fill="#dcdcdc" stroke="#aaa"/><path d="M10 16l6-6h-3V4H7v6H4z" fill="#bdbdbd"/>`,
  vback: `<circle cx="10" cy="10" r="7.500" fill="#ddd" stroke="#aaa"/><path d="M9 4L4 8l5 4V9h4v5h2V7H9z" fill="#999"/>`,
  vfwd: `<circle cx="10" cy="10" r="7.500" fill="#ddd" stroke="#aaa"/><path d="M11 4l5 4-5 4V9H7v5H5V7h6z" fill="#999"/>`,
  vpen: `<path d="M5 3h11l-4 15H2z" fill="#dfeaf5" stroke="#2f6fb0" stroke-width="1.3"/>` + line('M11 4l-4 10', '#2f6fb0', 1),
  vhelp: `<rect x="3" y="8" width="9" height="11" fill="#fff" stroke="#444"/>` + line('M5 12h5M5 15h5', '#444', 1) + `<text x="7" y="12" font-size="15" font-weight="700" font-family="Liberation Sans" fill="#e2c000" stroke="#554" stroke-width=".4">?</text>`
};

class McIcon extends HTMLElement {
    static get observedAttributes() { return ['name']; }
    connectedCallback() { this._render(); }
    attributeChangedCallback() { this._render(); }
    _render() {
        if (!this.shadowRoot) this.attachShadow({ mode: 'open' });
        const s = this.getAttribute('size') || 20;
        this.shadowRoot.innerHTML = `<style>:host{display:inline-flex;flex:none;width:${s}px;height:${s}px}svg{display:block;width:100%;height:100%;overflow:visible}</style>
          <svg viewBox="0 0 20 20">${ICONS[this.getAttribute('name')] || ''}</svg>`;
    }
}
customElements.define('mc-icon', McIcon);

// toolbar built from a token string: ":" grip, "|" separator, "v" caret, ">" flyout arrow, "=N" spacer
class McToolbar extends HTMLElement {
    connectedCallback() {
        const root = this.attachShadow({ mode: 'open' });
        const vert = this.hasAttribute('vertical');
        const size = this.getAttribute('size') || 20;
        const cell = this.getAttribute('cell') || 22;
        const parts = this.getAttribute('items').trim().split(/\s+/).map(t => {
            if (t === ':') return '<i class="grip"></i>';
            if (t === '|') return '<i class="sep"></i>';
            if (t === 'v') return '<i class="caret"></i>';
            if (t === '>') return '<i class="fly"></i>';
            if (t[0] === '=') return `<i style="flex:none;${vert ? 'height' : 'width'}:${t.slice(1)}px"></i>`;
            return `<span class="cell"><mc-icon name="${t}" size="${size}"></mc-icon></span>`;
        }).join('');
        root.innerHTML = `<style>
          :host { display: flex; flex-direction: ${vert ? 'column' : 'row'}; align-items: center; flex: none; }
          .cell { flex: none; display: flex; align-items: center; justify-content: center; ${vert ? `height:${cell}px;width:100%` : `width:${cell}px;height:100%`}; }
          i { display: block; flex: none; }
          .grip { ${vert ? 'height:9px;width:14px' : 'width:12px;height:18px'}; background-image: radial-gradient(#c4c4c4 1px, transparent 1.2px); background-size: 4px 4px; background-position: center; background-repeat: ${vert ? 'repeat-x' : 'repeat-y'}; }
          .sep { ${vert ? 'height:8px;width:20px' : 'width:8px;height:22px'}; background: linear-gradient(#c9c9c9, #c9c9c9) center / ${vert ? '100% 1px' : '1px 100%'} no-repeat; }
          .caret { width: 13px; height: 10px; position: relative; }
          .caret::after { content: ""; position: absolute; left: 2px; top: 3px; border: 3px solid transparent; border-top: 4px solid #777; border-bottom: 0; }
          .fly { width: 10px; height: 14px; position: relative; }
          .fly::after { content: ""; position: absolute; left: 3px; top: 3px; border: 3.500px solid transparent; border-left: 4px solid #888; border-right: 0; }
        </style>${parts}`;
    }
}
customElements.define('mc-toolbar', McToolbar);

class McTitlebar extends HTMLElement {
    connectedCallback() {
        this.attachShadow({ mode: 'open' }).innerHTML = `<style>
          :host { display: flex; align-items: center; height: 20px; flex: none; padding-left: 3px; color: #a6a6a6; position: relative; }
          span { margin-left: 4px; white-space: pre; font: 12px ${CJK}; }
          .ctl { margin-left: auto; display: flex; }
          .ctl b { display: block; width: 26px; text-align: center; font: 12px "DejaVu Sans"; color: #b5b5b5; }
        </style>
        <mc-icon name="xlogo" size="17"></mc-icon><span>Mastercam 铣削 X9  C:\\Users\\Administrator\\Desktop\\MCX\\b1992-331b-013.mcx-9</span>
        <div class="ctl"><b>‒</b><b>❐</b><b>✕</b></div>`;
    }
}
customElements.define('mc-titlebar', McTitlebar);

class McMenubar extends HTMLElement {
    connectedCallback() {
        const items = JSON.parse(this.getAttribute('items'));
        const html = items.map(([label, w]) => `<a style="width:${w}px">${label}</a>`).join('');
        this.attachShadow({ mode: 'open' }).innerHTML = `<style>
          :host { display: flex; align-items: center; flex: none; }
          a { flex: none; white-space: nowrap; font: 12px ${CJK}; color: var(--mc-menu, #222); }
        </style>${html}`;
    }
}
customElements.define('mc-menubar', McMenubar);

class CoordField extends HTMLElement {
    connectedCallback() {
        this.attachShadow({ mode: 'open' }).innerHTML = `<style>
          :host { display: flex; align-items: center; width: 146px; height: 23px; box-sizing: border-box; border: 1px solid #9aa5b0; background: #f0f0f0; padding-left: 3px; color: #7a7a7a; font: 12px "Noto Sans", sans-serif; flex: none; position: relative; }
          :host::after { content: ""; position: absolute; right: 5px; top: 9px; border: 3px solid transparent; border-top: 4px solid #c4c4c4; border-bottom: 0; }
        </style><slot></slot>`;
    }
}
customElements.define('coord-field', CoordField);

class TreeNode extends HTMLElement {
    connectedCallback() {
        const lv = +this.getAttribute('level');
        const exp = this.getAttribute('exp');
        const isize = +(this.getAttribute('isize') || 16);
        const iconLeft = [59, 78, 98, 117][lv] - isize / 2 - 30;
        const textLeft = [73, 92, 111, 130][lv] - 30;
        const boxLeft = [37, 56, 75][lv] - 30;
        this.attachShadow({ mode: 'open' }).innerHTML = `<style>
          :host { display: block; height: 16px; position: relative; }
          .row { display: flex; align-items: center; height: 16px; padding-left: ${exp ? boxLeft : 0}px; white-space: nowrap; }
          .box { flex: none; width: 9px; height: 9px; box-sizing: border-box; border: 1px solid #8a8a8a; background: linear-gradient(#fff, #ddd); position: relative; }
          .box::before { content: ""; position: absolute; left: 1px; right: 1px; top: 3px; height: 1px; background: #222; }
          .plus::after { content: ""; position: absolute; top: 1px; bottom: 1px; left: 3px; width: 1px; background: #222; }
          .ic { flex: none; display: flex; align-items: center; position: absolute; left: ${iconLeft}px; }
          .t { position: absolute; left: ${textLeft}px; font: 12px ${CJK}; line-height: 16px; height: 16px; color: #1c1c1c; padding: 0 2px 0 0; letter-spacing: ${lv === 2 ? '.08px' : '-.2px'}; }
          .sel { background: #e2e2e2; }
        </style>
        <div class="row">${exp ? `<div class="box ${exp === '+' ? 'plus' : ''}"></div>` : ''}
          <span class="ic"><mc-icon name="${this.getAttribute('icon')}" size="${isize}"></mc-icon></span>
          ${this.textContent.trim() ? `<span class="t ${this.hasAttribute('sel') ? 'sel' : ''}"><slot></slot></span>` : ''}</div>`;
    }
}
customElements.define('tree-node', TreeNode);

class PathPanel extends HTMLElement {
    connectedCallback() {
        const ops = [
            ['1 - 平面铣 - [WCS: 俯视图] - [刀具面: 俯视图]', '#1 - M63.00 面铣刀 - FLY63.0', '刀路 - 4.7K - b1992-331b-013.NC - 程序号码 0', true],
            ['2 - 外形铣削 (2D) - [WCS: 俯视图] - [刀具面: 俯视图]', '#2 - M16.00 平底刀 - FC16.0', '刀路 - 6.4K - b1992-331b-013.NC - 程序号码 0'],
            ['3 - 2D 高速刀路 (2D 动态铣削) - [WCS: 俯视图] - [刀具面: 俯视图]', '#2 - M16.00 平底刀 - FC16.0', '刀路 - 8.7K - b1992-331b-013.NC - 程序号码 0'],
            ['4 - 2D 高速刀路 (2D 动态铣削) - [WCS: 俯视图] - [刀具面: 俯视图]', '#3 - M10.00 平底刀 - 10 平底刀', '刀路 - 40.3K - b1992-331b-013.NC - 程序号码 0']
        ];
        const rows = ops.map(([op, tool, path, sel]) => `
          <tree-node level="2" exp="-" icon="opf" isize="17" ${sel ? 'sel' : ''}>${op}</tree-node>
          <tree-node level="3" icon="fold">参数</tree-node>
          <tree-node level="3" icon="tool">${tool}</tree-node>
          <tree-node level="3" icon="geo">图形 - (1) 串连</tree-node>
          <tree-node level="3" icon="tpath">${path}</tree-node>`).join('');
        const guides = [0, 1, 2, 3].map(i => {
            const y = 56 + i * 80;
            return `M54 ${y}h6M68 ${y + 8}V${y + 64}` + [16, 32, 48, 64].map(d => `M68 ${y + d}h12`).join('');
        }).join('');
        this.attachShadow({ mode: 'open' }).innerHTML = `<style>
          :host { display: flex; flex-direction: column; width: 357px; flex: none; position: relative; }
          .head { height: 33px; margin-top: 4px; display: flex; align-items: center; padding-left: 5px; background: #f0f0f0; flex: none; }
          h2 { margin: 0; font: 400 19px ${CJK}; color: #444; }
          .head .ctl { margin-left: auto; display: flex; align-items: center; gap: 7px; margin-right: 8px; color: #777; font: 12px "DejaVu Sans"; }
          .tri { border: 5px solid transparent; border-top: 6px solid #777; border-bottom: 0; margin-right: 2px; }
          .tools { background: #f0f0f0; padding-left: 2px; flex: none; }
          mc-toolbar { height: 25px; }
          .wrap { flex: 1; background: #f8f8f8; display: flex; flex-direction: column; padding: 6px 6px 0 3px; min-height: 0; }
          .tree { height: 712px; box-sizing: border-box; border: 2px solid #c9c9c9; border-bottom-width: 1px; border-right-width: 1px; background: #fff; position: relative; flex: none; overflow: hidden; display: flex; flex-direction: column; }
          .rows { flex: 1; position: relative; overflow: hidden; }
          .rows svg { position: absolute; left: 0; top: 0; }
          .hs { height: 16px; display: flex; align-items: center; background: #f0f0f0; flex: none; position: relative; }
          .hs b { position: absolute; left: 20px; width: 251px; height: 14px; top: 1px; box-sizing: border-box; border: 1px solid #999; border-radius: 2px; background: linear-gradient(#f2f2f2, #bdbdbd); text-align: center; font: 400 9px/11px "Liberation Sans"; color: #555; }
          .hs i { position: absolute; top: 4px; border: 4px solid transparent; }
          .tabs { height: 23px; margin: 23px -6px 0 -3px; border-top: 1px solid #e6e6e6; background: #f0f0f0; display: flex; flex: none; align-items: stretch; box-sizing: border-box; }
          .tabs a { font: 12px ${CJK}; padding: 1px 6px; }
          .tabs a.on { background: #fff; border-right: 1px solid #ddd; }
        </style>
        <div class="head"><h2>刀路</h2><div class="ctl"><i class="tri"></i><span>⚲</span><span>✕</span></div></div>
        <div class="tools">
          <mc-toolbar size="20" items="=1 play xcur =1 | toolg toolx | wblue wclip wgear g1 toolarrow | wand | help"></mc-toolbar>
          <mc-toolbar size="20" items="=3 lock wlight ghost | dn up mv ud | wsel circsq stepg | mach ballp"></mc-toolbar>
        </div>
        <div class="wrap">
          <div class="tree">
            <div class="rows">
              <svg width="345" height="400" fill="none" stroke="#111" stroke-dasharray="1 1"><path d="M16 8h6M30 16v24M35 24h7M35 40h7M49 46v330M49 376h11${guides}" stroke-width="1"/></svg>
              <tree-node level="0" exp="-" icon="group" isize="17">机床群组-1</tree-node>
              <tree-node level="1" exp="+" icon="bars">属性 - 3 - AXIS VMC</tree-node>
              <tree-node level="1" exp="-" icon="ops">OP1</tree-node>
              ${rows}
              <tree-node level="2" icon="flag"></tree-node>
            </div>
            <div class="hs"><i style="left:4px;border-right-color:#555;border-left:0"></i><b>III</b><i style="right:6px;border-left-color:#555;border-right:0"></i></div>
          </div>
          <div class="tabs"><a class="on">刀路</a><a>Art</a></div>
        </div>`;
    }
}
customElements.define('path-panel', PathPanel);

class McMark extends HTMLElement {
    connectedCallback() {
        const acc = {
            globe: `<circle cx="24" cy="14" r="4.500" fill="#f0b000"/>`,
            ring: `<circle cx="24" cy="14" r="3.500" fill="none" stroke="#111" stroke-width="1.800"/>`,
            doc: `<rect x="20" y="8" width="8" height="11" fill="#fff" stroke="#555"/><path d="M21.500 11h5M21.500 13.500h5M21.500 16h5" stroke="#555"/>`,
            check: `<path d="M15 12l4 5 8-12" fill="none" stroke="#111" stroke-width="2"/>`
        }[this.getAttribute('acc')] || '';
        this.attachShadow({ mode: 'open' }).innerHTML = `<style>:host{display:block;width:30px;height:20px;flex:none}svg{display:block}</style>
          <svg width="30" height="20" viewBox="0 0 30 20"><path d="M1 19 6 1h7L7 19zM9 19l4-13 5 10 8-15h3l-4 18h-5l1-6-4 6h-3l-1-6-2 6z" fill="#c9203a"/><path d="M0 9l13-3M0 13l10-2" stroke="#fff" stroke-width="1"/>${acc}</svg>`;
    }
}
customElements.define('mc-mark', McMark);

class CadPreview extends HTMLElement {
    connectedCallback() {
        const holes = [[78, 69, 1.500, 1.500], [123, 69, 1.500, 1.500], [137, 69, 3.500, 3], [137, 78, 3, 2.500], [222, 69, 3.500, 3], [222, 78, 3, 2.500], [249, 72, 2.500, 2], [275, 72, 2.500, 2], [78, 111, 1.500, 1.500], [123, 111, 1.500, 1.500], [137, 103, 3, 2.500], [137, 112, 3.500, 3], [222, 103, 3, 2.500], [222, 112, 3.500, 3], [249, 109, 2.500, 2], [275, 109, 2.500, 2]]
            .map(([x, y, a, b]) => `<ellipse cx="${x}" cy="${y}" rx="${a}" ry="${b}" fill="#fff"/>`).join('');
        this.attachShadow({ mode: 'open' }).innerHTML = `<style>:host{display:block}svg{display:block}</style>
          <svg width="400" height="202" viewBox="0 0 400 202">
            <path d="M68 0V202M0 59H400" stroke="#c4c4c4"/>
            <rect x="68" y="59" width="223" height="62" rx="2" fill="#5f5f5f"/>
            <ellipse cx="101" cy="90" rx="20" ry="17" fill="none" stroke="#444"/>
            <ellipse cx="101" cy="90" rx="17" ry="14" fill="#fff"/>
            <rect x="240" y="77" width="45" height="27" rx="13" fill="#fff"/>
            ${holes}
            <path d="M16 174v10h5" stroke="#777" stroke-dasharray="1 1" fill="none"/>
            <rect x="6" y="198" width="10" height="3" fill="#777"/>
            <path d="M370 186v5M397 186v5M370 188h27" stroke="#999" fill="none"/><rect x="376" y="191" width="12" height="2" fill="#bbb"/>
          </svg>`;
    }
}
customElements.define('cad-preview', CadPreview);

class ReportSheet extends HTMLElement {
    connectedCallback() {
        const cols = [106, 34, 110, 33, 34, 33, 44, 62, 43, 59, 160];
        const head = ['NC程序名', '刀号<br>(T)', '刀具名称', '刀具<br>直径', '刀角<br>半径', '主轴<br>转速', '进给<br>速度', 'XY/Z余量', 'Z深度', '单段时间', '备注及说明'];
        const data = [
            ['OP1', '1', 'FLY63.0', '63.0', '0.0', '4500', '1500.0', '0.0', '0.1', '00:00:12', ''],
            ['', '2', 'fc16.0', '16.0', '0.0', '625', '75.0', '0.0', '-8.0', '00:10:29', ''],
            ['', '3', '10 平底刀', '10.0', '0.0', '625', '75.0', '1.0', '-7.0', '00:05:06', '']
        ];
        const align = ['l', 'l', 'l', 'l', 'l', 'c', 'c', 'c', 'l', 'c', 'l'];
        const cells = head.map(h => `<div class="th">${h}</div>`).join('') +
            data.map(r => r.map((v, i) => `<div class="td ${align[i]} ${i === 0 && v ? 'op' : ''}">${v}</div>`).join('')).join('');
        this.attachShadow({ mode: 'open' }).innerHTML = `<style>
          :host { display: block; width: 794px; box-sizing: border-box; padding-left: 46px; background: #fff; color: #111; font: 14px "Noto Sans CJK SC", sans-serif; border: 1px solid #222; outline: 2px solid #c8ad84; }
          .top { height: 53px; width: 721px; display: flex; align-items: flex-start; }
          .ttl { font-weight: 700; font-size: 14px; letter-spacing: 1px; margin: 24px 0 0 208px; display: flex; align-items: center; height: 20px; white-space: pre; }
          .ttl .sp { width: 130px; }
          .ttl .a { clip-path: inset(0 25% 0 0); }
          .ttl .b { clip-path: inset(62% 0 0 35%); }
          .logo { margin: 28px 27px 0 auto; white-space: nowrap; display: flex; align-items: baseline; }
          .logo b { font: italic 700 16px "Liberation Sans", sans-serif; letter-spacing: -.9px; }
          .logo span { font: 17px "Liberation Sans", sans-serif; color: #444; margin-left: 2px; letter-spacing: -.4px; }
          .tb { width: 721px; box-sizing: border-box; border: 2px solid #1a1a1a; border-bottom: 0; }
          .doc { height: 21px; display: flex; align-items: center; padding-left: 3px; border-bottom: 2px solid #1a1a1a; white-space: nowrap; font-size: 13px; letter-spacing: 2px; }
          .doc span { width: 83px; flex: none; }
          .doc b { font: 700 12.700px "Liberation Mono", monospace; letter-spacing: 0; }
          .main { display: grid; grid-template-columns: 401px 1fr; }
          .l { border-right: 2px solid #1a1a1a; }
          .h2 { border-bottom: 2px solid #1a1a1a; display: flex; align-items: center; font-weight: 700; font-size: 14px; letter-spacing: 1px; padding-bottom: 2px; box-sizing: border-box; height: 25px; }
          .row { display: grid; grid-template-columns: 72px 1fr; border-bottom: 2px solid #1a1a1a; box-sizing: border-box; }
          .tag { border-right: 1px solid #1a1a1a; display: flex; flex-direction: column; align-items: center; justify-content: center; color: #f00; font-weight: 700; font-size: 13px; line-height: 17px; letter-spacing: 2px; padding-bottom: 2px; text-align: center; }
          .tag mc-mark { margin-bottom: 4px; }
          .body { padding-left: 10px; font-size: 14px; display: flex; flex-direction: column; }
          .pair { display: grid; grid-template-columns: 103px 1fr; }
          .coord { display: grid; grid-template-columns: 77px 1fr; height: 98px; box-sizing: border-box; }
          .coord .tag { font-size: 13.500px; line-height: 19px; }
          .chk { height: 49px; border-bottom: 2px solid #444; display: grid; grid-template-columns: 172px 1fr; padding-left: 11px; font-size: 14px; line-height: 23px; box-sizing: border-box; }
          .chk div:nth-child(even) { margin-top: -1px; }
          .zv { padding: 1px 0 0 4px; font-size: 14px; line-height: 24px; white-space: pre; }
          .zv p { margin: 0; display: flex; padding-left: 2px; font-size: 14.500px; }
          .zv p span:nth-child(1) { width: 89px; } .zv p span:nth-child(2) { width: 96px; }
          .note { height: 31px; box-sizing: border-box; border-bottom: 2px solid #1a1a1a; display: flex; align-items: center; font-weight: 700; font-size: 15px; padding-left: 1px; border-top: 2px solid #1a1a1a; }
          .grid { display: grid; grid-template-columns: ${cols.slice(0, -1).map(c => c + 'px').join(' ')} 1fr; grid-template-rows: 41px 23px 22px 22px; }
          .th, .td { box-sizing: border-box; border-right: 1px solid #666; border-bottom: 2px solid #444; min-width: 0; overflow: hidden; }
          .th:nth-child(11n+1), .td:nth-child(11n+1) { border-right: 2px solid #333; }
          .th:nth-child(11n), .td:nth-child(11n) { border-right: 0; }
          .td:nth-last-child(-n+11) { border-bottom: 1px solid #aaa; }
          .th { display: flex; align-items: center; justify-content: center; text-align: center; font-weight: 700; font-size: 12.500px; line-height: 15px; white-space: nowrap; padding-bottom: 4px; border-bottom-width: 3px; border-bottom-color: #333; }
          .td { display: flex; align-items: center; font: 11px "Liberation Mono", "Noto Sans CJK SC", monospace; padding-bottom: 3px; white-space: nowrap; }
          .td.c { justify-content: center; } .td.l { padding-left: 1px; }
          .td.op { font: 13px "Liberation Sans", sans-serif; padding-left: 6px; }
          .td:nth-child(11n+3) { padding-left: 5px; } .td:nth-child(11n+2) { padding-left: 5px; }
          .pad { height: 166px; }
        </style>
        <div class="top">
          <div class="ttl"><span class="a">苏</span><span class="sp"></span><span class="b">有</span>限公司 CNC程式单</div>
          <div class="logo"><b>Mastercam</b><span>2021</span></div>
        </div>
        <div class="tb">
          <div class="doc"><span>文档位置:</span><b>C:\\USERS\\ADMINISTRATOR\\DESKTOP\\MCX\\B1992-331B-013.MCX-9</b></div>
          <div class="main">
            <div class="l">
              <div class="h2" style="padding-left:146px">工件装夹示意图:</div>
              <cad-preview style="height:202px;border-bottom:2px solid #1a1a1a;box-sizing:content-box;margin-left:-2px;clip-path:inset(0 0 -2px 2px)"></cad-preview>
              <div class="coord">
                <div class="tag" style="border-right-width:2px"><mc-mark acc="check"></mc-mark>坐标<br>零点区</div>
                <div>
                  <div class="chk"><div>☐XY四边分中</div><div>☐X单边Y分中</div><div>☐XY单边</div><div>☐X分中Y单边</div></div>
                  <div class="zv">Z值坐标☆___________________________为零<p><span>☆顶面对刀</span><span>☆底面对刀</span><span>☆底面对刀反总高</span></p></div>
                </div>
              </div>
            </div>
            <div>
              <div class="h2" style="padding-left:33px;font-size:15px;white-space:pre">☆ 编程人员:    大刀</div>
              <div class="row" style="height:69px"><div class="tag"><mc-mark acc="globe"></mc-mark>时间区</div>
                <div class="body" style="gap:14px;justify-content:center;font-size:12.500px;padding-top:3px;letter-spacing:.7px"><div>年/月/日:2020年7月9日</div><div style="white-space:pre">时       间:8:36</div></div></div>
              <div class="row" style="height:102px"><div class="tag"><mc-mark acc="ring"></mc-mark>装夹<br>点亮区</div>
                <div class="body" style="line-height:25.500px">
                  <div>请选择☆___________装夹</div>
                  <div class="pair"><span>☆虎钳夹</span><span>☆码仔压</span></div>
                  <div class="pair"><span>☆卡盘夹</span><span>☆胶水黏</span></div>
                  <div class="pair"><span>☆吸盘吸</span><span>☆工装夹</span></div>
                </div></div>
              <div class="row" style="height:70px"><div class="tag"><mc-mark acc="doc"></mc-mark>加工<br>要求区</div>
                <div class="body" style="font-size:12.500px;line-height:16.500px;justify-content:center;letter-spacing:1.2px;padding-left:14px;padding-top:6px;white-space:nowrap">
                  <div>1:首件自检;</div><div>2:多次校验坐标原点;</div><div>3:表面不得有:碰伤、划痕、毛刺.</div></div></div>
              <div class="row" style="height:61px;border-bottom:0"><div class="tag"><mc-mark></mc-mark>加工<br>时间</div><div></div></div>
            </div>
          </div>
          <div class="note">备注信息:</div>
          <div class="grid">${cells}</div>
        </div>
        <div class="pad"></div>`;
    }
}
customElements.define('report-sheet', ReportSheet);

class WinBtn extends HTMLElement {
    connectedCallback() {
        this.attachShadow({ mode: 'open' }).innerHTML = `<style>
          :host { display: flex; align-items: center; justify-content: center; width: 30px; height: 16px; border: 1px solid #5b7590; border-radius: 2px; background: linear-gradient(#b3cbe3 45%, #8aa8c6 50%, #c6d9ec); box-sizing: border-box; font: 700 9px "DejaVu Sans"; color: #2c3e50; flex: none; }
          :host([close]) { background: linear-gradient(#d98a7c 45%, #b8402c 50%, #d36a55); border-color: #6d2a2a; color: #fff; }
        </style><slot></slot>`;
    }
}
customElements.define('win-btn', WinBtn);

class ViewerWindow extends HTMLElement {
    connectedCallback() {
        this.attachShadow({ mode: 'open' }).innerHTML = `<style>
          :host { position: absolute; left: 410px; top: 148px; width: 1267px; height: 801px; box-sizing: border-box; border: 1px solid #3aa8c8; border-top: 2px solid #222; border-radius: 5px 5px 0 0; background: #b8d0e8; display: flex; flex-direction: column; padding: 0 7px 7px 7px; z-index: 2; }
          .ttl { height: 28px; margin: 0 -7px; padding: 3px 8px 0 9px; box-sizing: border-box; background: linear-gradient(#96b2d0, #b9d3ec); display: flex; align-items: center; flex: none; font: 13px "Noto Sans", sans-serif; color: #111; }
          .ttl span { margin-left: 4px; }
          .btns { margin-left: auto; display: flex; gap: 3px; }
          .menu { height: 18px; flex: none; background: linear-gradient(#fff, #eef1fa 30%, #d3daec); display: flex; align-items: center; padding-left: 2px; }
          .menu mc-menubar { margin-left: 11px; }
          .mbtns { margin-left: auto; display: flex; gap: 1px; height: 18px; }
          .mbtns b { width: 17px; height: 17px; border: 1px solid #bcd; background: #dde6f3; display: block; box-sizing: border-box; text-align: center; font: 700 9px/15px "DejaVu Sans"; color: #667; }
          .rule { height: 4px; flex: none; border-top: 2px solid #666; background: #f4f4f4; box-sizing: border-box; }
          .tools { height: 25px; flex: none; background: linear-gradient(#fff, #f3f3f3); display: flex; align-items: center; padding-left: 1px; font: 11px ${CJK}; color: #555; white-space: nowrap; overflow: hidden; }
          .tools mc-toolbar { height: 22px; }
          .tog { width: 23px; height: 23px; box-sizing: border-box; border: 1px solid #4a8fd0; background: #cfe4f8; display: flex; align-items: center; justify-content: center; flex: none; }
          .cap { flex: none; overflow: visible; }
          .combo { width: 84px; height: 23px; background: #fff; display: flex; align-items: center; padding-left: 4px; margin-left: 3px; position: relative; flex: none; box-sizing: border-box; color: #222; font-size: 12px; }
          .combo::after { content: ""; position: absolute; right: 0; top: 0; bottom: 0; width: 11px; background: #f0f0f0; }
          .combo::before { content: ""; position: absolute; right: 2px; top: 10px; border: 3px solid transparent; border-top: 4px solid #222; border-bottom: 0; z-index: 1; }
          .pg { width: 99px; height: 23px; background: #fff; display: flex; align-items: center; padding-left: 4px; box-sizing: border-box; flex: none; color: #222; font-size: 12px; }
          .body { flex: 1; display: flex; min-height: 0; }
          .side { width: 204px; flex: none; background: #f0f0f0; display: flex; flex-direction: column; }
          .sh { height: 20px; display: flex; align-items: center; justify-content: space-between; padding: 0 6px 6px 2px; flex: none; font: 12px ${CJK}; box-sizing: border-box; }
          .sh b { font: 400 13px "DejaVu Sans"; }
          .list { flex: 1; margin: 2px 8px 3px 5px; background: #fff; border: 2px solid #9a9a9a; border-right-color: #ddd; border-bottom-color: #ddd; box-sizing: border-box; }
          .tabs { height: 20px; display: flex; flex: none; padding-left: 2px; font: 11px ${CJK}; align-items: flex-start; white-space: nowrap; }
          .tabs a { padding: 0 5px; height: 18px; box-sizing: border-box; margin-top: 2px; border-bottom: 2px solid #555; border-left: 1px solid #aaa; line-height: 17px; width: 100px; flex: none; }
          .tabs a.on { margin-top: -3px; height: 19px; width: 85px; border: 1px solid #555; border-top: 1px solid #aaa; background: #f6f6f6; border-bottom-width: 2px; padding: 0 3px; }
          .doc { flex: 1; background: #ababab; display: flex; overflow: hidden; }
          .pagewrap { flex: 1; padding: 5px 0 0 123px; overflow: hidden; }
          .shadow { width: 794px; box-shadow: 6px 0 0 #777; height: 100%; background: #fff; }
          .vs { width: 17px; flex: none; background: #f0f0f0; display: flex; flex-direction: column; align-items: center; position: relative; }
          .vs .th { position: absolute; left: 1px; right: 1px; top: 17px; height: 429px; border: 1px solid #aaa; border-radius: 2px; box-sizing: border-box; background: linear-gradient(90deg, #f8f8f8, #cfcfcf); }
          .vs i { position: absolute; left: 5px; border: 4px solid transparent; }
        </style>
        <div class="ttl"><mc-icon name="xlogo" size="16"></mc-icon><span><slot name="title"></slot></span>
          <div class="btns"><win-btn>▬</win-btn><win-btn>▣</win-btn><win-btn close>✖</win-btn></div></div>
        <div class="menu"><mc-icon name="xlogo" size="15"></mc-icon>
          <mc-menubar items='[["文件(F)",51],["文档(D)",56],["报表(R)",54],["窗口(W)",58],["帮助(H)",55],["关于(A)",50]]'></mc-menubar>
          <div class="mbtns"><b>‒</b><b>❐</b><b>✕</b></div></div>
        <div class="rule"></div>
        <div class="tools">
          <div class="tog"><mc-icon name="vlist" size="18"></mc-icon></div>
          <mc-toolbar items="|"></mc-toolbar>
          <mc-icon name="vprint" size="17"></mc-icon><span class="cap" style="margin-left:4px;width:29px">Print...</span>
          <mc-toolbar cell="18" size="17" items="=5 | vcopy =3 | vfind =4 | vpage =3 vmulti v vstack =2 | =1 vz1 =5 vz2"></mc-toolbar>
          <div class="combo">100 %</div>
          <mc-toolbar cell="18" size="16" items="=2 | vup =5 vdn =5"></mc-toolbar>
          <div class="pg">1/1</div>
          <mc-toolbar cell="14" size="14" items="=2 | vback =6"></mc-toolbar>
          <span class="cap" style="color:#888;width:46px">Backward</span>
          <mc-toolbar cell="14" size="14" items="=9 vfwd =5"></mc-toolbar>
          <span class="cap" style="color:#888;width:37px">Forward</span>
          <mc-toolbar cell="18" size="16" items="=6 | vpen v vhelp"></mc-toolbar>
        </div>
        <div class="body">
          <div class="side"><div class="sh"><span>内容</span><b>✕</b></div><div class="list"></div>
            <div class="tabs"><a>Table Of Contents</a><a class="on">Thumbnail View</a></div></div>
          <div class="doc"><div class="pagewrap"><div class="shadow"><slot></slot></div></div>
            <div class="vs"><i style="top:3px;border-bottom:5px solid #333;border-top:0"></i><div class="th"></div><i style="bottom:4px;border-top:5px solid #333;border-bottom:0"></i></div></div>
        </div>`;
    }
}
customElements.define('viewer-window', ViewerWindow);

class StatusCell extends HTMLElement {
    connectedCallback() {
        const w = this.getAttribute('w');
        this.attachShadow({ mode: 'open' }).innerHTML = `<style>
          :host { display: flex; align-items: center; justify-content: center; width: ${w}px; flex: none; background: #f7f7f7; height: 23px; box-sizing: border-box; font: 12px ${CJK}; color: #111; position: relative; white-space: nowrap; overflow: hidden; }
        </style><slot></slot>`;
    }
}
customElements.define('status-cell', StatusCell);

class McStatus extends HTMLElement {
    connectedCallback() {
        this.attachShadow({ mode: 'open' }).innerHTML = `<style>
          :host { display: flex; align-items: flex-end; height: 25px; flex: none; background: #606060; color: #fff; font: 12px ${CJK}; }
          .msg { margin: 0 auto 4px 4px; white-space: pre; color: #f4f4f4; }
          .cells { display: flex; gap: 2px; margin-right: 1px; }
          .cb { width: 0; height: 0; border: 4px solid transparent; border-top: 5px solid #111; border-bottom: 0; display: block; flex: none; }
          .z { background: #ffff80; width: 63px; height: 18px; line-height: 18px; padding-left: 1px; box-sizing: border-box; }
          .dash { display: block; width: 8px; height: 3px; background: #111; flex: none; }
          .long { display: block; width: 24px; height: 1px; background: #111; flex: none; margin-left: 84px; }
        </style>
        <div class="msg">WCS: 俯视图  刀具/绘图平面: 俯视图</div>
        <div class="cells">
          <status-cell w="22"><span style="font:11px 'Liberation Mono'">3D</span></status-cell>
          <status-cell w="60">屏幕视图</status-cell>
          <status-cell w="44"><span style="font:11px 'Liberation Mono'">WCS</span></status-cell>
          <status-cell w="26">平面</status-cell>
          <status-cell w="14" style="margin-right:-1px">Z</status-cell>
          <status-cell w="86" style="justify-content:flex-start;gap:14px;padding-left:2px;background:#fff"><span class="z">0.0</span><i class="cb"></i></status-cell>
          <status-cell w="31"><mc-icon name="sel2" size="15"></mc-icon></status-cell>
          <status-cell w="30" style="align-items:flex-start;background:#fff"><mc-icon name="bx2" size="14"></mc-icon><span style="position:absolute;left:1px;right:1px;bottom:0;height:7px;background:#808080"></span></status-cell>
          <status-cell w="30" style="align-items:flex-start;background:#fff"><mc-icon name="vmulti" size="14"></mc-icon><span style="position:absolute;left:1px;right:1px;bottom:0;height:7px;background:#ff8040"></span></status-cell>
          <status-cell w="28" style="margin-right:-2px">|层别</status-cell>
          <status-cell w="101" style="background:#fff;gap:4px;justify-content:flex-start;padding-left:4px;font-size:11.500px">11 : b1992-331l<i class="cb"></i></status-cell>
          <status-cell w="34">属性</status-cell>
          <status-cell w="40" style="gap:12px;margin-left:-1px;background:#fff"><span style="font:14px 'DejaVu Sans'">*</span><i class="cb" style="border-top-color:#999;border-width:3px;border-top-width:4px;border-bottom:0"></i></status-cell>
          <status-cell w="131" style="background:#fff;justify-content:flex-start;padding-left:4px"><span class="dash"></span><span class="long"></span></status-cell>
          <status-cell w="38">群组</status-cell>
          <status-cell w="18">?</status-cell>
        </div>`;
    }
}
customElements.define('mc-status', McStatus);

class McViewport extends HTMLElement {
    connectedCallback() {
        this.attachShadow({ mode: 'open' }).innerHTML = `<style>
          :host { flex: 1; display: flex; flex-direction: column; min-width: 0; }
          .strip { height: 4px; background: #e6e6e6; flex: none; }
          .black { flex: 1; background: #000; position: relative; color: #fff; }
          .hl { position: absolute; left: 0; right: 0; top: 235px; height: 2px; background: #555; }
          .vl { position: absolute; left: 250px; bottom: 0; height: 37px; width: 1px; background: #555; }
          .name { position: absolute; left: 20px; bottom: 6px; font: 700 12px ${CJK}; }
          .scale { position: absolute; left: 1388px; top: 784px; width: 96px; height: 23px; box-sizing: border-box; border-left: 1px solid #ccc; border-right: 1px solid #ccc; text-align: center; font: 700 14px/12px "Liberation Serif", serif; white-space: nowrap; }
          .scale i { display: block; height: 1px; background: #eee; }
          .scale b { display: block; font: 700 11px/15px ${CJK}; }
          .lines { height: 4px; flex: none; background: #fff; border-bottom: 1px solid #ddd; box-sizing: border-box; }
          .tabs { height: 24px; background: #f0f0f0; display: flex; flex: none; }
          .tabs a { width: 64px; background: #f8f8f8; border-right: 1px solid #ccc; box-sizing: border-box; font: 12px ${CJK}; line-height: 24px; padding-left: 3px; white-space: nowrap; margin-top: 1px; }
        </style>
        <div class="strip"></div>
        <div class="black"><div class="hl"></div><div class="vl"></div><div class="name">俯视图</div>
          <div class="scale">19.396 mm<i></i><b>公制</b></div></div>
        <div class="lines"></div>
        <div class="tabs"><a>主视图面板</a></div>`;
    }
}
customElements.define('mc-viewport', McViewport);

class McWatermark extends HTMLElement {
    connectedCallback() {
        this.attachShadow({ mode: 'open' }).innerHTML = `<style>
          :host { position: absolute; left: 1637px; top: 948px; width: 260px; height: 80px; z-index: 3; pointer-events: none; }
          svg { position: absolute; left: 0; top: 0; }
          .t { position: absolute; left: 79px; top: 2px; font: 700 41px/46px "Noto Sans CJK SC", sans-serif; color: rgba(170, 170, 170, .62); white-space: nowrap; }
          .u { position: absolute; left: 83px; top: 53px; font: 11.500px/14px "Liberation Sans", sans-serif; letter-spacing: 2.500px; color: rgba(190, 190, 190, .4); white-space: nowrap; }
        </style>
        <svg width="73" height="80" viewBox="0 0 73 80">
          <path d="M36 0 72 21V58L36 80 0 58V21z" fill="#3f9fd8" opacity=".6"/>
          <path d="M36 26 55 37V59L36 70 17 59V37z" fill="none" stroke="#fff" stroke-opacity=".45" stroke-width="5"/>
          <path d="M36 40 55 30M36 40 17 30M36 40V70" stroke="#fff" stroke-opacity=".35" stroke-width="2" fill="none"/>
          <path d="M8 18C24 30 20 60 30 78M60 8C52 25 48 30 36 26" stroke="#fff" stroke-opacity=".3" stroke-width="2" fill="none"/>
        </svg>
        <div class="t">3D世界网</div><div class="u">WWW.3DSJW.COM</div>`;
    }
}
customElements.define('mc-watermark', McWatermark);

class McTooltip extends HTMLElement {
    connectedCallback() {
        this.attachShadow({ mode: 'open' }).innerHTML = `<style>
          :host { position: absolute; left: 1741px; top: 1003px; width: 81px; height: 37px; box-sizing: border-box; border: 1px solid #8d8d8d; border-bottom: 0; border-radius: 3px 3px 0 0; background: linear-gradient(#fff, #e7eaf0); z-index: 4; color: #666; font: 12px ${CJK}; padding: 2px 0 0 4px; line-height: 17px; white-space: pre; }
        </style><slot></slot>`;
    }
}
customElements.define('mc-tooltip', McTooltip);

class McApp extends HTMLElement {
    connectedCallback() {
        const menu = [['文件(F)', 51.500], ['编辑(E)', 51], ['视图(V)', 52], ['分析(A)', 53], ['绘图(C)', 52], ['实体(S)', 51], ['建模(P)', 52], ['转换(X)', 52], ['机床类型(M)', 78], ['刀路(T)', 51], ['屏幕(R)', 52], ['ART', 36], ['设置(I)', 48], ['帮助(H)', 50]];
        this.attachShadow({ mode: 'open' }).innerHTML = `<style>
          :host { display: flex; flex-direction: column; width: 1920px; height: 1040px; overflow: hidden; position: relative; background: #f0f0f0; }
          mc-menubar { height: 26px; padding-left: 15px; }
          .rows { flex: none; height: 84px; display: flex; flex-direction: column; }
          .rows > * { height: 24px; }
          .r2 { margin-top: 3px; } .r3 { margin-top: 3px; height: 26px !important; display: flex; align-items: center; flex: none; }
          .r3 b { font: 700 17px "Liberation Sans", sans-serif; color: #777; text-align: center; flex: none; }
          .body { flex: 1; display: flex; min-height: 0; }
          .lstrip { width: 25px; flex: none; padding: 1px 0 0 0; box-sizing: border-box; }
          .rstrip { width: 30px; flex: none; }
          .center { flex: 1; display: flex; flex-direction: column; min-width: 0; }
          .func { height: 34px; flex: none; display: flex; align-items: center; padding-left: 190px; font: 12px ${CJK}; color: #111; }
          .work { flex: 1; display: flex; min-height: 0; }
        </style>
        <mc-titlebar></mc-titlebar>
        <mc-menubar items='${JSON.stringify(menu)}'></mc-menubar>
        <div class="rows">
          <mc-toolbar style="margin-left:-3px" items=": new open save print preview : undo redo : fit brush | zwin zcir zcur | zprev zout | rot arrback tri : cv1 cv2 cv3 cv4 : cred v : globe v sph v sdark sgreen sred swhite : pen pen2 v | pendim v : qline qdim tree | people report sigma grid4 v"></mc-toolbar>
          <mc-toolbar class="r2" items=": plus v line v circ v rect v fil v spl v cyl v surf v : trim cross v : x1 x2 x3 x4 x5 x6 x7 x8 | x9 v gridp x10 v : lamp note | dimh v dimv v | check v : s1 s2 s3 s4 s5 v | m1 m2 m3 | b1 v b2 v b3 v"></mc-toolbar>
          <div class="r3">
            <mc-toolbar items="=2 :" style="height:22px"></mc-toolbar>
            <b style="width:22px">X</b><coord-field>-50.55347</coord-field>
            <b style="width:26px">Y</b><coord-field style="width:145px">20.10108</coord-field>
            <b style="width:27px">Z</b><coord-field>0.0</coord-field>
            <mc-toolbar style="height:24px" items="=2 qb1 qb2 qx v =1 help : dashb | sel2 | cyc | fillb v =1 | dashw v =1 curg curcube | bx1 bx2 bx3 | cv cur2 | tgt clip | no ok help"></mc-toolbar>
          </div>
        </div>
        <div class="body">
          <mc-toolbar class="lstrip" vertical items=": l1 l2 l3 l4 | l5 > l6 > | l7 l8 l9 > | l10 l11 > l12 > l13 l14 l15 : l16 l17 l18 | l19 l20 l21 | l22 l23 l24 l25 | l26 l27 l28 l29"></mc-toolbar>
          <div class="center">
            <div class="func">功能状态栏</div>
            <div class="work"><path-panel></path-panel><mc-viewport></mc-viewport></div>
          </div>
          <mc-toolbar class="rstrip" vertical items="=26 : r1 r2 =120 : t1 t2 t3 t4 t5 t6 t7 t8 t9 t15 | t10 t11 t12 | t13 t14 t15 |"></mc-toolbar>
        </div>
        <mc-status></mc-status>
        <viewer-window>
          <span slot="title">ActiveReports Viewer - [3 - AXIS VMC]</span>
          <report-sheet></report-sheet>
        </viewer-window>
        <mc-watermark></mc-watermark>
        <mc-tooltip>网络  2
<i>Internet 访问</i></mc-tooltip>`;
    }
}
customElements.define('mc-app', McApp);
</script>
</body>
</html>
